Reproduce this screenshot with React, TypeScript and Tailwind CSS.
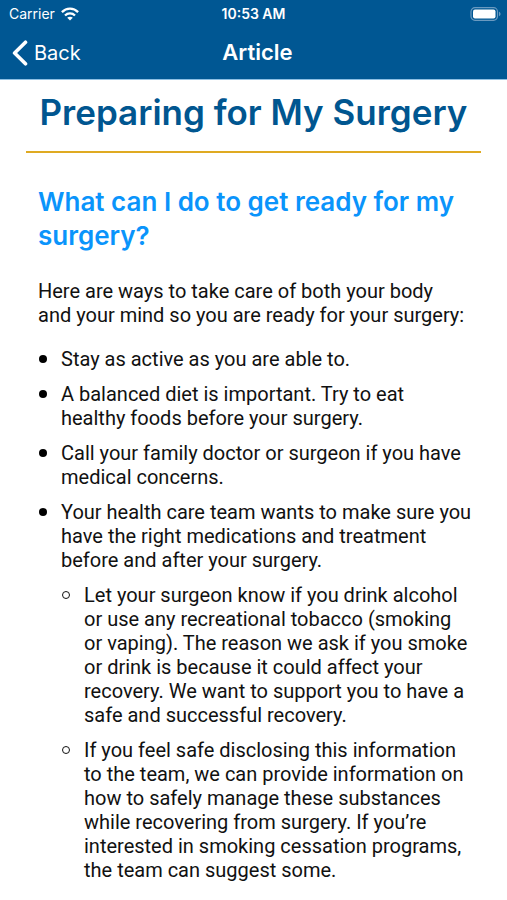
import type { ReactNode } from "react";

function WifiIcon() {
  return (
    <svg viewBox="0 0 18 14" className="h-3.5 w-[18px]" fill="none" stroke="white" strokeWidth="2.3" aria-hidden="true">
      <path d="M0.9 5.1C5.4 0.5 12.6 0.5 17.1 5.1" />
      <path d="M4 8.5C6.8 5.7 11.2 5.7 14 8.5" />
      <path d="M9 13.4L6.2 10.7C7.8 9.3 10.2 9.3 11.8 10.7Z" fill="white" stroke="none" />
    </svg>
  );
}

function BatteryIcon() {
  return (
    <svg viewBox="0 0 32 14" className="h-3.5 w-8" aria-hidden="true">
      <rect x="1" y="0.7" width="26.5" height="12.6" rx="4" fill="none" stroke="#6a9ac0" strokeWidth="1.2" />
      <rect x="3" y="2.5" width="22.5" height="9" rx="2" fill="white" />
      <path d="M29 4.8C31 5.5 31 8.5 29 9.2Z" fill="#6a9ac0" />
    </svg>
  );
}

function Item({ hollow = false, children }: { hollow?: boolean; children: ReactNode }) {
  return (
    <li className="flex whitespace-nowrap">
      <span className="w-[23px] shrink-0 pt-2 pl-px" aria-hidden="true">
        <span
          className={
            hollow
              ? "block size-2 rounded-full border border-[#111111]"
              : "block size-2 rounded-full bg-black"
          }
        />
      </span>
      <div>{children}</div>
    </li>
  );
}

export default function App() {
  return (
    <div className="min-h-screen bg-white font-['Roboto','Liberation_Sans',sans-serif] text-[#111111]">
      <header className="border-b border-[#8dc0e4] bg-[#005793] font-['Inter','Liberation_Sans',sans-serif] text-white">
        <div className="grid h-7 grid-cols-3 items-center px-[9px] text-sm">
          <div className="flex items-center gap-1.5">
            <span>Carrier</span>
            <WifiIcon />
          </div>
          <span className="text-center font-semibold">10:53 AM</span>
          <div className="-mr-1 flex justify-end">
            <BatteryIcon />
          </div>
        </div>
        <div className="grid h-[51px] grid-cols-3 items-center pr-1 pl-3">
          <button type="button" className="flex items-center gap-1.5 pb-0.5 text-xl">
            <svg viewBox="0 0 16 26" className="h-[26px] w-4" fill="none" stroke="white" strokeWidth="3.6" strokeLinecap="round" strokeLinejoin="round" aria-hidden="true">
              <path d="M13.5 2.2L2.6 13L13.5 23.8" />
            </svg>
            Back
          </button>
          <span className="pb-0.5 text-center text-[22px] font-semibold">Article</span>
        </div>
      </header>

      <main className="px-[26px] pb-4">
        <h1 className="border-b-2 border-[#dfaa22] pt-3 pb-[19px] text-center font-['Inter','Liberation_Sans',sans-serif] text-[35px] leading-[40px] font-semibold whitespace-nowrap text-[#005690]">
          Preparing for My Surgery
        </h1>
        <div className="px-3">
          <h2 className="pt-8 font-['Inter','Liberation_Sans',sans-serif] text-[26px] leading-[34px] font-semibold text-[#0a94fb]">
            What can I do to get ready for my surgery?
          </h2>
          <div className="pt-[26px] text-xl leading-6">
            <p className="whitespace-nowrap">
              Here are ways to take care of both your body
              <br />
              and your mind so you are ready for your surgery:
            </p>
            <ul className="mt-5 flex flex-col gap-[11px]">
              <Item>Stay as active as you are able to.</Item>
              <Item>
                A balanced diet is important. Try to eat
                <br />
                healthy foods before your surgery.
              </Item>
              <Item>
                Call your family doctor or surgeon if you have
                <br />
                medical concerns.
              </Item>
              <Item>
                Your health care team wants to make sure you
                <br />
                have the right medications and treatment
                <br />
                before and after your surgery.
                <ul className="mt-[11px] flex flex-col gap-[11px]">
                  <Item hollow>
                    Let your surgeon know if you drink alcohol
                    <br />
                    or use any recreational tobacco (smoking
                    <br />
                    or vaping). The reason we ask if you smoke
                    <br />
                    or drink is because it could affect your
                    <br />
                    recovery. We want to support you to have a
                    <br />
                    safe and successful recovery.
                  </Item>
                  <Item hollow>
                    If you feel safe disclosing this information
                    <br />
                    to the team, we can provide information on
                    <br />
                    how to safely manage these substances
                    <br />
                    while recovering from surgery. If you’re
                    <br />
                    interested in smoking cessation programs,
                    <br />
                    the team can suggest some.
                  </Item>
                </ul>
              </Item>
            </ul>
          </div>
        </div>
      </main>
    </div>
  );
}
